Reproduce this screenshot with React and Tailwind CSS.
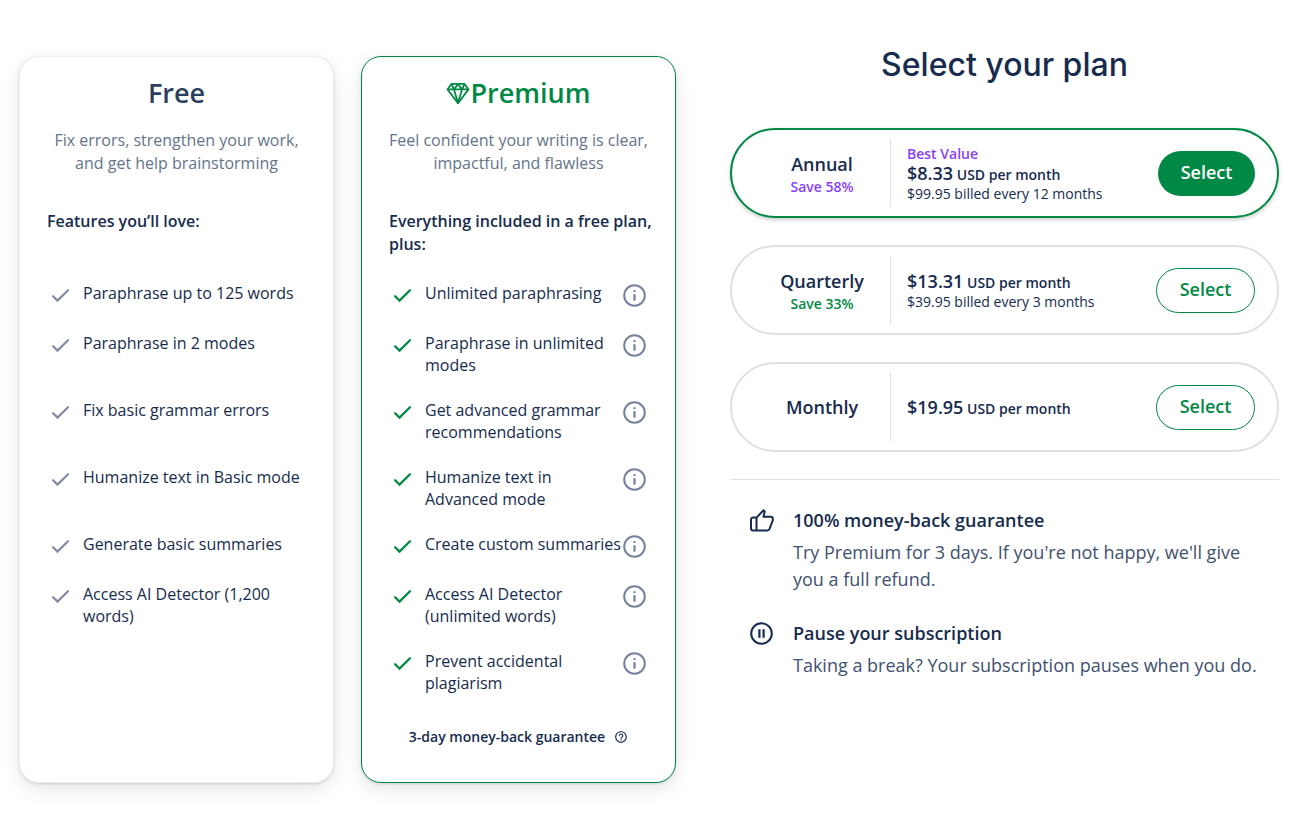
import { useState } from 'react';
import clsx from 'clsx';

const rows = [
  { free: 'Paraphrase up to 125 words', premium: 'Unlimited paraphrasing' },
  { free: 'Paraphrase in 2 modes', premium: 'Paraphrase in unlimited modes', tall: true },
  { free: 'Fix basic grammar errors', premium: 'Get advanced grammar recommendations', tall: true },
  { free: 'Humanize text in Basic mode', premium: 'Humanize text in Advanced mode', tall: true },
  { free: 'Generate basic summaries', premium: 'Create custom summaries' },
  { free: 'Access AI Detector (1,200 words)', premium: 'Access AI Detector (unlimited words)', tall: true },
  { premium: 'Prevent accidental plagiarism', tall: true },
];

const plans = [
  {
    name: 'Annual',
    save: 'Save 58%',
    tag: 'Best Value',
    price: '$8.33',
    billed: '$99.95 billed every 12 months',
  },
  { name: 'Quarterly', save: 'Save 33%', price: '$13.31', billed: '$39.95 billed every 3 months' },
  { name: 'Monthly', price: '$19.95' },
];

const CheckIcon = ({ className }) => (
  <svg viewBox="0 0 27 27" className={clsx('size-[27px] shrink-0', className)} fill="none" aria-hidden="true">
    <path d="M6.1 14.2l4.400 4.400L21 8.300" stroke="currentColor" strokeWidth="2.3" strokeLinecap="round" />
  </svg>
);

const InfoIcon = () => (
  <svg viewBox="0 0 27 27" className="size-[27px]" fill="none" stroke="currentColor" aria-hidden="true">
    <circle cx="13.5" cy="13.5" r="10.3" strokeWidth="2" />
    <path d="M13.5 13.2v4.600" strokeWidth="2.200" strokeLinecap="round" />
    <circle cx="13.5" cy="9.1" r="1.2" fill="currentColor" stroke="none" />
  </svg>
);

const DiamondIcon = () => (
  <svg
    viewBox="0 0 24 24"
    className="size-6"
    fill="none"
    stroke="currentColor"
    strokeWidth="1.8"
    strokeLinejoin="round"
    aria-hidden="true"
  >
    <path d="M5.400 2.900h13.200l3.900 5.500L12 22.300 1.500 8.400z" />
    <path d="M1.500 8.400h21M8 8.400l4 13.600 4-13.600M5.400 3.200L8 8.400l4-5.200 4 5.200 2.600-5.200" />
  </svg>
);

const HelpIcon = () => (
  <svg viewBox="0 0 24 24" className="size-[14px]" fill="currentColor" aria-hidden="true">
    <path d="M11 18h2v-2h-2zm1-16C6.48 2 2 6.48 2 12s4.48 10 10 10 10-4.48 10-10S17.52 2 12 2m0 18c-4.41 0-8-3.59-8-8s3.59-8 8-8 8 3.59 8 8-3.59 8-8 8m0-14c-2.21 0-4 1.79-4 4h2c0-1.1.9-2 2-2s2 .9 2 2c0 2-3 1.75-3 5h2c0-2.25 3-2.5 3-5 0-2.21-1.79-4-4-4" />
  </svg>
);

const ThumbIcon = () => (
  <svg
    viewBox="0 0 27 27"
    className="size-[27px] shrink-0"
    fill="none"
    stroke="currentColor"
    strokeWidth="2"
    strokeLinejoin="round"
    aria-hidden="true"
  >
    <path d="M7.500 10.600L14.500 3.300l1.200 1.200-1.200 5.300h7.300c1.200 0 2 .8 2 2v1.500l-3.400 8.900c-.4.9-1 1.200-1.900 1.200H4a2 2 0 0 1-2-2v-8.800a2 2 0 0 1 2-2z" />
    <path d="M7.500 10.600v12.800" />
  </svg>
);

const PauseIcon = () => (
  <svg
    viewBox="0 0 27 27"
    className="size-[27px] shrink-0"
    fill="none"
    stroke="currentColor"
    strokeWidth="2"
    aria-hidden="true"
  >
    <circle cx="12.5" cy="13.5" r="10.3" />
    <path d="M10.4 9.200v8.600M14.600 9.200v8.600" strokeWidth="2.200" />
  </svg>
);

const FeatureCard = ({ premium, title, description, heading }) => (
  <section
    className={clsx(
      'flex flex-col rounded-[20px] border bg-white px-[27px] pt-4 pb-[35px] shadow-[0_6px_18px_rgba(0,0,0,0.1),0_1px_3px_rgba(0,0,0,0.12)]',
      premium ? 'border-[#008945]' : 'border-[#eeeeee]'
    )}
  >
    <h2
      className={clsx(
        'flex items-center justify-center text-[27px] leading-10 font-semibold',
        premium ? 'text-[#008945]' : 'text-[#2b3f5f]'
      )}
    >
      {premium && <DiamondIcon />}
      {title}
    </h2>
    <p className="mt-4 text-center text-base leading-[23px] text-[#64748b]">{description}</p>
    <h3 className="mt-[35px] -mr-3 min-h-[46px] text-base leading-[23px] font-semibold">{heading}</h3>
    <ul className="mt-[26px] flex flex-col gap-[23px]">
      {rows.map((row) => {
        const text = premium ? row.premium : row.free;
        if (!text) return null;
        return (
          <li key={text} className={clsx('flex items-start', row.tall ? 'min-h-[44px]' : 'min-h-[27px]')}>
            <CheckIcon className={premium ? 'text-[#008945]' : 'text-[#848da3]'} />
            <span className="ml-[9px] flex-1 text-base leading-[22px]">{text}</span>
            {premium && (
              <button type="button" aria-label={`About ${text}`} className="text-[#76829a]">
                <InfoIcon />
              </button>
            )}
          </li>
        );
      })}
    </ul>
    {premium && (
      <div className="mt-[33px] flex items-center justify-center gap-[9px] text-sm leading-5 font-semibold">
        3-day money-back guarantee
        <button type="button" aria-label="About the guarantee">
          <HelpIcon />
        </button>
      </div>
    )}
  </section>
);

const PlanOption = ({ plan, selected, onSelect }) => (
  <div
    className={clsx(
      'flex h-[90px] items-center rounded-full border-2 px-[22px]',
      selected ? 'border-[#008945] shadow-[0_2px_4px_rgba(0,0,0,0.2)]' : 'border-[#e0e0e0]'
    )}
  >
    <div className="flex h-[68px] w-[137px] shrink-0 flex-col items-center justify-center border-r border-[#e0e0e0]">
      <h2 className="text-lg leading-[27px] font-semibold">{plan.name}</h2>
      {plan.save && (
        <p
          className={clsx(
            'text-sm leading-[18px] font-semibold',
            plan.tag ? 'text-[#8a3ffc]' : 'text-[#008945]'
          )}
        >
          {plan.save}
        </p>
      )}
    </div>
    <div className="flex-1 pt-0.5 pl-4 text-sm leading-[18px]">
      {plan.tag && <p className="font-semibold text-[#8a3ffc]">{plan.tag}</p>}
      <p className="leading-5 font-semibold">
        <span className="text-lg leading-5">{plan.price}</span> USD per month
      </p>
      {plan.billed && <p>{plan.billed}</p>}
    </div>
    <button
      type="button"
      onClick={onSelect}
      className={clsx(
        'h-[45px] rounded-full pb-0.5 text-lg font-semibold',
        selected ? 'w-[97px] bg-[#008945] text-white' : 'w-[99px] border border-[#008945] text-[#008945]'
      )}
    >
      Select
    </button>
  </div>
);

const Perk = ({ icon, title, children }) => (
  <div className="flex gap-[17px]">
    {icon}
    <div className="flex flex-col gap-[5px] text-lg leading-[27px]">
      <h3 className="font-semibold">{title}</h3>
      <p className="text-[#3f5170]">{children}</p>
    </div>
  </div>
);

const App = () => {
  const [selected, setSelected] = useState('Annual');

  return (
    <main className="grid grid-cols-[657fr_549fr] items-start gap-[54px] bg-white pr-[21px] pl-[19px] font-['Open_Sans',sans-serif] text-[#162b4e]">
      <div className="mt-14 mb-[54px] grid grid-cols-2 gap-[27px]">
        <FeatureCard
          title="Free"
          description="Fix errors, strengthen your work, and get help brainstorming"
          heading="Features you’ll love:"
        />
        <FeatureCard
          premium
          title="Premium"
          description="Feel confident your writing is clear, impactful, and flawless"
          heading="Everything included in a free plan, plus:"
        />
      </div>

      <div className="pt-[45px]">
        <h1 className="text-center font-['Inter',sans-serif] text-[32px] leading-10 font-medium">
          Select your plan
        </h1>
        <div className="mt-[43px] flex flex-col gap-[27px]">
          {plans.map((plan) => (
            <PlanOption
              key={plan.name}
              plan={plan}
              selected={selected === plan.name}
              onSelect={() => setSelected(plan.name)}
            />
          ))}
        </div>
        <div className="mt-[27px] flex flex-col gap-[27px] border-t border-[#e0e0e0] px-[19px] pt-[27px]">
          <Perk icon={<ThumbIcon />} title="100% money-back guarantee">
            Try Premium for 3 days. If you're not happy, we'll give you a full refund.
          </Perk>
          <Perk icon={<PauseIcon />} title="Pause your subscription">
            Taking a break? Your subscription pauses when you do.
          </Perk>
        </div>
      </div>
    </main>
  );
};

export default App;
